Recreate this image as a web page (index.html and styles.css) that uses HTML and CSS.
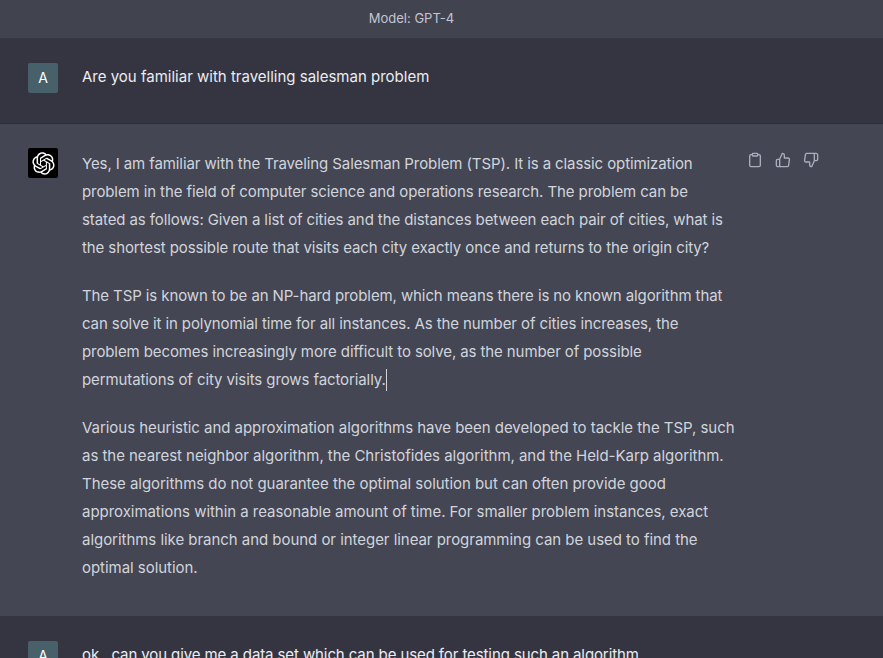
FILE: index.html
```html
<!DOCTYPE html>
<html lang="en">
<head>
<meta charset="utf-8">
<title>Model: GPT-4</title>
<link rel="stylesheet" href="styles.css">
</head>
<body>
<main class="chat">
  <header class="model-bar">Model: GPT-4</header>
  <section class="row row-user">
    <div class="avatar avatar-user">A</div>
    <div class="message message-user">Are you familiar with travelling salesman problem</div>
  </section>
  <section class="row row-assistant">
    <div class="avatar avatar-bot">
      <svg class="logo" viewBox="0 0 41 41" fill="currentColor"><path d="M37.5324 16.8707C37.9808 15.5241 38.1363 14.0974 37.9886 12.6859C37.8409 11.2744 37.3934 9.91076 36.676 8.68622C35.6126 6.83404 33.9882 5.3676 32.0373 4.4985C30.0864 3.62941 27.9098 3.40259 25.8215 3.85078C24.8796 2.7893 23.7219 1.94125 22.4257 1.36341C21.1295 0.785575 19.7249 0.491269 18.3058 0.500197C16.1708 0.495044 14.0893 1.16803 12.3614 2.42214C10.6335 3.67624 9.34853 5.44666 8.6917 7.47815C7.30085 7.76286 5.98686 8.3414 4.8377 9.17505C3.68854 10.0087 2.73073 11.0782 2.02839 12.312C0.956464 14.1591 0.498905 16.2988 0.721698 18.4228C0.944492 20.5467 1.83612 22.5449 3.268 24.1293C2.81966 25.4759 2.66413 26.9026 2.81182 28.3141C2.95951 29.7256 3.40701 31.0892 4.12437 32.3138C5.18791 34.1659 6.8123 35.6322 8.76321 36.5013C10.7141 37.3704 12.8907 37.5973 14.9789 37.1492C15.9208 38.2107 17.0786 39.0587 18.3747 39.6366C19.6709 40.2144 21.0755 40.5087 22.4946 40.4998C24.6307 40.5054 26.7133 39.8321 28.4418 38.5772C30.1704 37.3223 31.4556 35.5506 32.1119 33.5179C33.5027 33.2332 34.8167 32.6547 35.9659 31.821C37.115 30.9874 38.0728 29.9178 38.7752 28.684C39.8458 26.8371 40.3023 24.6979 40.0789 22.5748C39.8556 20.4517 38.9639 18.4544 37.5324 16.8707ZM22.4978 37.8849C20.7443 37.8874 19.0459 37.2733 17.6994 36.1501C17.7601 36.117 17.8666 36.0586 17.936 36.0161L25.9004 31.4156C26.1003 31.3019 26.2663 31.137 26.3813 30.9378C26.4964 30.7386 26.5563 30.5124 26.5549 30.2825V19.0542L29.9213 20.998C29.9389 21.0068 29.9541 21.0198 29.9656 21.0359C29.977 21.052 29.9842 21.0707 29.9867 21.0902V30.3889C29.9842 32.375 29.1946 34.2791 27.7909 35.6841C26.3872 37.0892 24.4838 37.8806 22.4978 37.8849ZM6.39227 31.0064C5.51397 29.4888 5.19742 27.7107 5.49804 25.9832C5.55718 26.0187 5.66048 26.0818 5.73461 26.1244L13.699 30.7248C13.8975 30.8408 14.1233 30.902 14.3532 30.902C14.583 30.902 14.8088 30.8408 15.0073 30.7248L24.731 25.1103V28.9979C24.7321 29.0177 24.7283 29.0376 24.7199 29.0556C24.7115 29.0736 24.6988 29.0893 24.6829 29.1012L16.6317 33.7497C14.9096 34.7416 12.8643 35.0097 10.9447 34.4954C9.02506 33.9811 7.38785 32.7263 6.39227 31.0064ZM4.29707 13.6194C5.17156 12.0998 6.55279 10.9364 8.19885 10.3327C8.19885 10.4013 8.19491 10.5228 8.19491 10.6071V19.808C8.19351 20.0378 8.25334 20.2638 8.36823 20.4629C8.48312 20.6619 8.64893 20.8267 8.84863 20.9404L18.5723 26.5542L15.206 28.4979C15.1894 28.5089 15.1703 28.5155 15.1505 28.5173C15.1307 28.5191 15.1107 28.516 15.0924 28.5082L7.04046 23.8557C5.32135 22.8601 4.06716 21.2235 3.55289 19.3046C3.03862 17.3858 3.30624 15.3413 4.29707 13.6194ZM31.955 20.0556L22.2312 14.4411L25.5976 12.4981C25.6142 12.4872 25.6333 12.4805 25.6531 12.4787C25.6729 12.4769 25.6928 12.4801 25.7111 12.4879L33.7631 17.1364C34.9967 17.849 36.0017 18.8982 36.6606 20.1613C37.3194 21.4244 37.6047 22.849 37.4832 24.2684C37.3617 25.6878 36.8382 27.0432 35.9743 28.1759C35.1103 29.3086 33.9415 30.1717 32.6047 30.6641C32.6047 30.5947 32.6047 30.4733 32.6047 30.3889V21.188C32.6066 20.9586 32.5474 20.7328 32.4332 20.5338C32.319 20.3348 32.154 20.1698 31.955 20.0556ZM35.3055 15.0128C35.2464 14.9765 35.1431 14.9142 35.069 14.8717L27.1045 10.2712C26.906 10.1554 26.6803 10.0943 26.4504 10.0943C26.2206 10.0943 25.9948 10.1554 25.7963 10.2712L16.0726 15.8858V11.9982C16.0715 11.9783 16.0753 11.9585 16.0837 11.9405C16.0921 11.9225 16.1048 11.9068 16.1207 11.8949L24.1719 7.25025C25.4053 6.53903 26.8158 6.19376 28.2383 6.25482C29.6608 6.31589 31.0364 6.78077 32.2044 7.59508C33.3723 8.40939 34.2842 9.53945 34.8334 10.8531C35.3826 12.1667 35.5464 13.6095 35.3055 15.0128ZM14.2424 21.9419L10.8752 19.9981C10.8576 19.9893 10.8423 19.9763 10.8309 19.9602C10.8195 19.9441 10.8122 19.9254 10.8098 19.9058V10.6071C10.8107 9.18295 11.2173 7.78848 11.9819 6.58696C12.7466 5.38544 13.8377 4.42659 15.1275 3.82264C16.4173 3.21869 17.8524 2.99464 19.2649 3.1767C20.6775 3.35876 22.0089 3.93941 23.1034 4.85067C23.0427 4.88379 22.937 4.94215 22.8668 4.98473L14.9024 9.58517C14.7025 9.69878 14.5366 9.86356 14.4215 10.0626C14.3065 10.2616 14.2466 10.4877 14.2479 10.7175L14.2424 21.9419ZM16.071 17.9991L20.4018 15.4978L24.7325 17.9975V22.9985L20.4018 25.4983L16.071 22.9985V17.9991Z"/></svg>
    </div>
    <div class="message message-bot">
      <p class="para-tight">Yes, I am familiar with the Traveling Salesman Problem (TSP). It is a classic optimization<br>problem in the field of computer science and operations research. The problem can be<br>stated as follows: Given a list of cities and the distances between each pair of cities, what is<br>the shortest possible route that visits each city exactly once and returns to the origin city?</p>
      <p class="para-tight">The TSP is known to be an NP-hard problem, which means there is no known algorithm that<br>can solve it in polynomial time for all instances. As the number of cities increases, the<br>problem becomes increasingly more difficult to solve, as the number of possible<br>permutations of city visits grows factorially.<span class="cursor"></span></p>
      <p class="para-loose">Various heuristic and approximation algorithms have been developed to tackle the TSP, such<br>as the nearest neighbor algorithm, the Christofides algorithm, and the Held-Karp algorithm.<br>These algorithms do not guarantee the optimal solution but can often provide good<br>approximations within a reasonable amount of time. For smaller problem instances, exact<br>algorithms like branch and bound or integer linear programming can be used to find the<br>optimal solution.</p>
    </div>
    <div class="actions">
      <button class="action" aria-label="Copy"><svg viewBox="0 0 24 24"><path d="M16 4h2a2 2 0 0 1 2 2v14a2 2 0 0 1-2 2H6a2 2 0 0 1-2-2V6a2 2 0 0 1 2-2h2"/><rect x="8" y="2" width="8" height="4" rx="1" ry="1"/></svg></button>
      <button class="action" aria-label="Good response"><svg viewBox="0 0 24 24"><path d="M14 9V5a3 3 0 0 0-3-3l-4 9v11h11.28a2 2 0 0 0 2-1.7l1.38-9a2 2 0 0 0-2-2.3zM7 22H4a2 2 0 0 1-2-2v-7a2 2 0 0 1 2-2h3"/></svg></button>
      <button class="action" aria-label="Bad response"><svg viewBox="0 0 24 24"><path d="M10 15v4a3 3 0 0 0 3 3l4-9V2H5.72a2 2 0 0 0-2 1.7l-1.38 9a2 2 0 0 0 2 2.3zm7-13h2.67A2.31 2.31 0 0 1 22 4v7a2.31 2.31 0 0 1-2.33 2H17"/></svg></button>
    </div>
  </section>
  <section class="row row-user row-last">
    <div class="avatar avatar-user">A</div>
    <div class="message message-user">ok , can you give me a data set which can be used for testing such an algorithm</div>
  </section>
</main>
</body>
</html>
```
FILE: styles.css
```css
* { box-sizing: border-box; }
html, body { margin: 0; height: 100%; overflow: hidden; background: #343541; }
body { font-family: Inter, "Liberation Sans", sans-serif; font-size: 15px; line-height: 28px; }
.chat { display: flex; flex-direction: column; height: 658px; overflow: hidden; }
.model-bar {
  height: 39px; flex: none;
  display: flex; align-items: center; justify-content: center;
  padding: 0 60px 3px 0;
  background: #41434f; color: #c5c5d2;
  border-bottom: 1px solid #373842;
  font-size: 13px; line-height: 20px;
}
.row { display: flex; flex: none; padding: 24px 0 0 28px; }
.row-user { background: #343541; height: 85px; border-bottom: 1px solid #2c2d37; }
.row-assistant { background: #444654; height: 492px; }
.row-last { height: 60px; padding-top: 25px; border-bottom: 0; }
.avatar {
  width: 30px; height: 30px; flex: none; border-radius: 2px;
  display: flex; align-items: center; justify-content: center;
  margin-right: 24px;
}
.avatar-user { background: #47606a; color: #fff; font-size: 14px; }
.avatar-bot { background: #000; color: #fff; }
.logo { width: 23px; height: 23px; display: block; }
.message { white-space: nowrap; }
.message-user { color: #ececf1; }
.row-last .message-user { letter-spacing: -0.1px; }
.message-bot { color: #d1d5db; width: 656px; padding-top: 2px; }
.message-bot p { margin: 0 0 20px; }
.para-tight { letter-spacing: -0.1px; }
.para-loose { letter-spacing: -0.04px; }
.cursor { display: inline-block; width: 1px; height: 22px; background: #d1d5db; vertical-align: -6px; }
.actions { display: flex; gap: 4px; margin-left: 5px; }
.action {
  width: 24px; height: 24px; padding: 4px; border: 0; background: none;
  color: #acacbe; display: block;
}
.action svg {
  width: 16px; height: 16px; display: block;
  fill: none; stroke: currentColor; stroke-width: 2; stroke-linecap: round; stroke-linejoin: round;
}
```
